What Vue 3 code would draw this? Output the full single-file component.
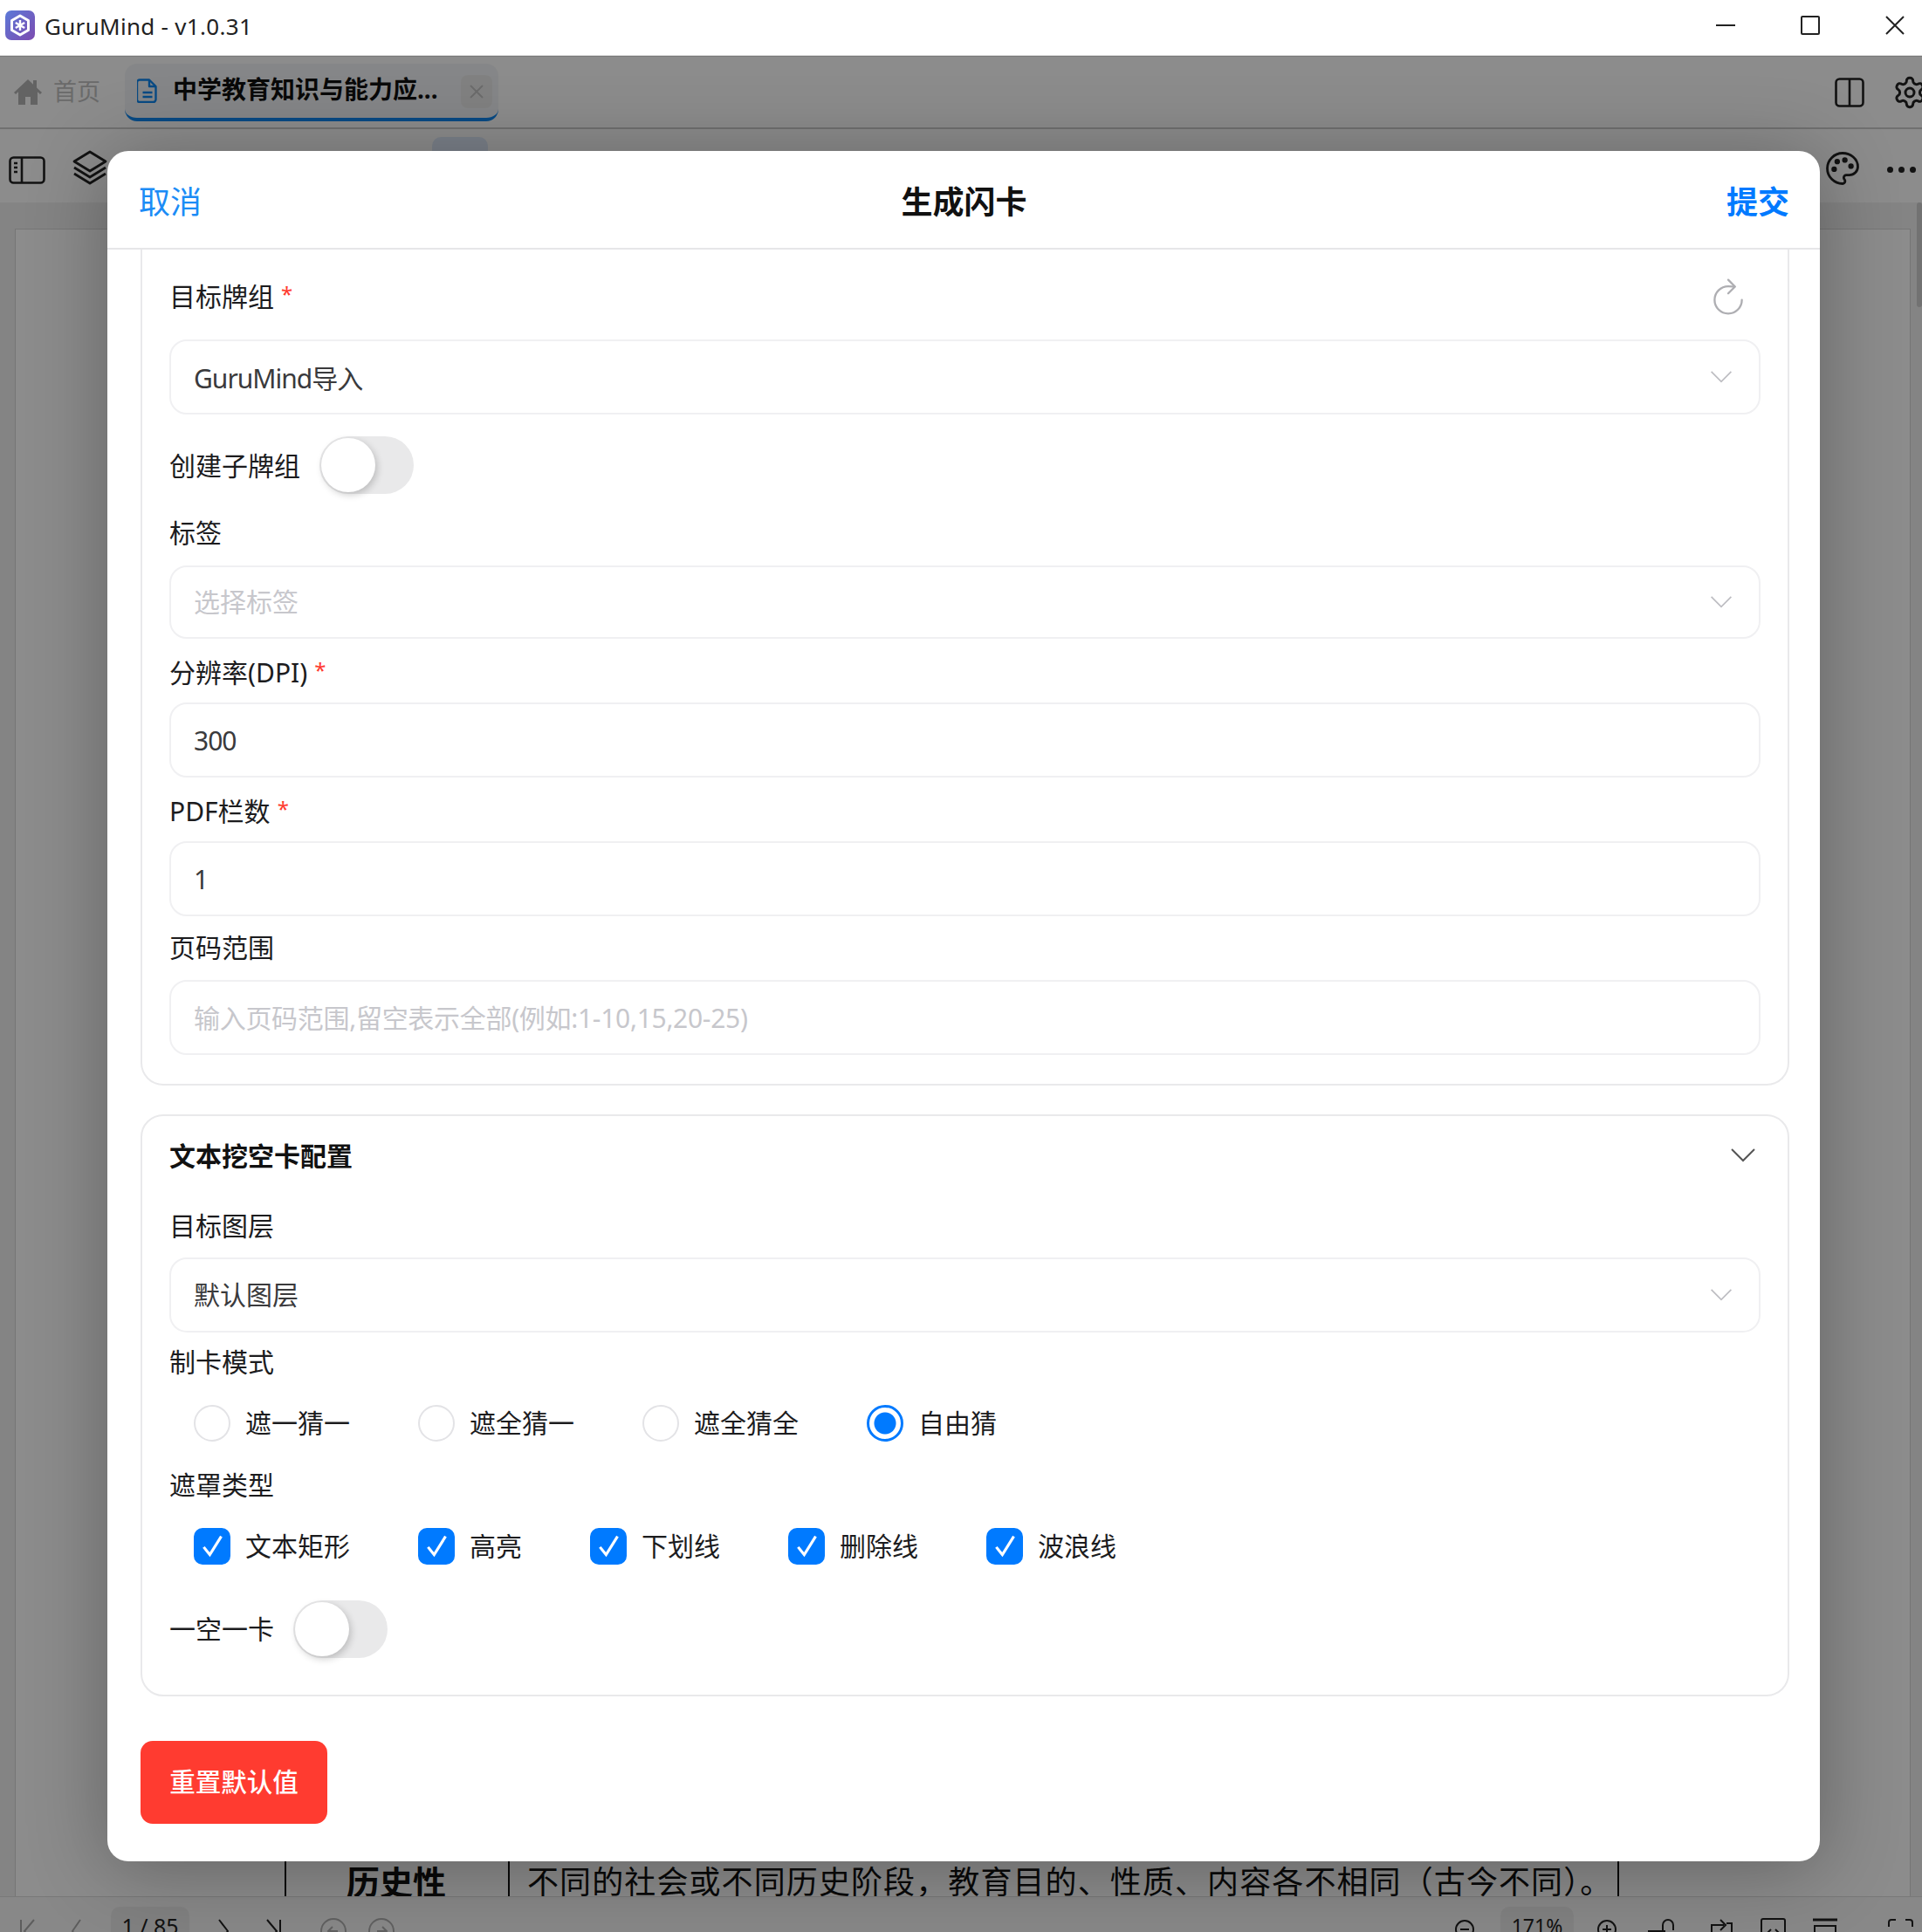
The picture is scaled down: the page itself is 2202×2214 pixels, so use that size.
<template>
  <div class="app">
    <div class="titlebar">
      <svg class="logo" viewBox="0 0 34 34">
        <defs>
          <linearGradient id="logoBg" x1="0" y1="0" x2="1" y2="1">
            <stop offset="0" stop-color="#5c7ad8" />
            <stop offset="1" stop-color="#7d4bb0" />
          </linearGradient>
        </defs>
        <rect width="34" height="34" rx="7" fill="url(#logoBg)" />
        <path d="M17 6l9.500 5.500v11L17 28l-9.500-5.500v-11z" fill="none" stroke="#fff" stroke-width="3" stroke-linejoin="round" />
        <path d="M17 11v12M11.800 14l10.400 6M22.200 14l-10.400 6" stroke="#fff" stroke-width="2.400" />
      </svg>
      <span class="app-name">GuruMind - v1.0.31</span>
      <div class="win-btns">
        <svg class="win-btn" viewBox="0 0 22 22"><path d="M0 11h22" /></svg>
        <svg class="win-btn" viewBox="0 0 22 22"><rect x="1" y="1" width="20" height="20" rx="1" /></svg>
        <svg class="win-btn" viewBox="0 0 22 22"><path d="M1 1l20 20M21 1L1 21" /></svg>
      </div>
    </div>

    <div class="tabbar">
      <svg class="home-icon" viewBox="0 0 32 30"><path d="M16 1L0 16l2 2 3-2.800V30h8v-9h6v9h8V15.200l3 2.800 2-2-6-5.600V2h-4v4.700z" fill="currentColor" /></svg>
      <span class="home-text">首页</span>
      <div class="tab">
        <svg class="doc-icon" viewBox="0 0 24 28" fill="none" stroke="currentColor" stroke-width="2.400" stroke-linejoin="round">
          <path d="M3 1.500h11l7.500 7.500v15a3 3 0 0 1-3 3h-15.500a3 3 0 0 1-3-3v-19.500a3 3 0 0 1 3-3z" />
          <path d="M14 2v7h7M6.500 16h11M6.500 21h11" />
        </svg>
        <span class="tab-title">中学教育知识与能力应...</span>
        <span class="tab-close">
          <svg viewBox="0 0 16 16"><path d="M1 1l14 14M15 1L1 15" /></svg>
        </span>
      </div>
      <div class="spacer"></div>
      <svg class="tool-icon columns" viewBox="0 0 34 34" fill="none" stroke="currentColor" stroke-width="2.600">
        <rect x="1.500" y="1.500" width="31" height="31" rx="4" />
        <path d="M17 2v30" />
      </svg>
      <svg class="tool-icon gear" viewBox="0 0 24 24" fill="none" stroke="currentColor" stroke-width="1.800" stroke-linejoin="round">
        <path d="M12.220 2h-.44a2 2 0 0 0-2 2v.18a2 2 0 0 1-1 1.730l-.43.25a2 2 0 0 1-2 0l-.15-.08a2 2 0 0 0-2.730.73l-.22.38a2 2 0 0 0 .73 2.730l.15.1a2 2 0 0 1 1 1.720v.51a2 2 0 0 1-1 1.740l-.15.09a2 2 0 0 0-.73 2.730l.22.38a2 2 0 0 0 2.730.73l.15-.08a2 2 0 0 1 2 0l.43.25a2 2 0 0 1 1 1.730V20a2 2 0 0 0 2 2h.44a2 2 0 0 0 2-2v-.18a2 2 0 0 1 1-1.730l.43-.25a2 2 0 0 1 2 0l.15.08a2 2 0 0 0 2.730-.73l.22-.39a2 2 0 0 0-.73-2.730l-.15-.08a2 2 0 0 1-1-1.740v-.5a2 2 0 0 1 1-1.740l.15-.09a2 2 0 0 0 .73-2.730l-.22-.38a2 2 0 0 0-2.730-.73l-.15.08a2 2 0 0 1-2 0l-.43-.25a2 2 0 0 1-1-1.730V4a2 2 0 0 0-2-2z" />
        <circle cx="12" cy="12" r="3" />
      </svg>
    </div>

    <div class="toolbar">
      <svg class="panel-icon" viewBox="0 0 42 32" fill="none" stroke="currentColor" stroke-width="2.600">
        <rect x="1.500" y="1.500" width="39" height="29" rx="4" />
        <path d="M15 2v28" />
        <path d="M6 8h4M6 13h4M6 18h4" stroke-width="2.400" />
      </svg>
      <svg class="layers-icon" viewBox="0 0 40 40" fill="none" stroke="currentColor" stroke-width="2.800" stroke-linejoin="round">
        <path d="M20 2L38 13 20 24 2 13z" />
        <path d="M2 20l18 11 18-11M2 27l18 11 18-11" />
      </svg>
      <div class="tool-pill"></div>
      <div class="spacer"></div>
      <svg class="palette-icon" viewBox="0 0 24 24" fill="none" stroke="currentColor" stroke-width="1.600">
        <circle cx="13.500" cy="6.500" r="1" fill="currentColor" />
        <circle cx="17.500" cy="10.500" r="1" fill="currentColor" />
        <circle cx="8.500" cy="7.500" r="1" fill="currentColor" />
        <circle cx="6.500" cy="12.500" r="1" fill="currentColor" />
        <path d="M12 2C6.500 2 2 6.500 2 12s4.500 10 10 10c.926 0 1.648-.746 1.648-1.688 0-.437-.18-.835-.437-1.125-.29-.289-.438-.652-.438-1.125a1.640 1.640 0 0 1 1.668-1.668h1.996c3.051 0 5.555-2.503 5.555-5.554C21.965 6.012 17.461 2 12 2z" />
      </svg>
      <span class="more-dots"><i></i><i></i><i></i></span>
    </div>

    <div class="doc-area">
      <div class="page">
        <div class="table-row">
          <div class="cell-key">历史性</div>
          <div class="cell-val">不同的社会或不同历史阶段，教育目的、性质、内容各不相同（古今不同）。</div>
        </div>
      </div>
      <div class="doc-scroll"></div>
    </div>

    <div class="bottombar">
      <svg class="nav first" viewBox="0 0 17 30"><path d="M1 2v26M16 2L5 15l11 13" /></svg>
      <svg class="nav prev" viewBox="0 0 11 30"><path d="M10 2L1 15l9 13" /></svg>
      <div class="page-pill"><span>1 / 85</span></div>
      <svg class="nav next" viewBox="0 0 12 30"><path d="M1 2l10 13L1 28" /></svg>
      <svg class="nav last" viewBox="0 0 17 30"><path d="M1 2l11 13L1 28M16 2v26" /></svg>
      <svg class="nav circle back" viewBox="0 0 30 30"><circle cx="15" cy="15" r="14" /><path d="M20 15H10M14 10l-5 5 5 5" /></svg>
      <svg class="nav circle fwd" viewBox="0 0 30 30"><circle cx="15" cy="15" r="14" /><path d="M10 15h10M16 10l5 5-5 5" /></svg>
      <div class="spacer"></div>
      <svg class="nav zoom-out" viewBox="0 0 22 30"><circle cx="11" cy="13" r="10" /><path d="M6 13h10" /></svg>
      <div class="zoom-pill"><span>171%</span></div>
      <svg class="nav zoom-in" viewBox="0 0 22 30"><circle cx="11" cy="13" r="10" /><path d="M6 13h10M11 8v10" /></svg>
      <svg class="nav lock" viewBox="0 0 30 30"><rect x="0" y="14" width="20" height="16" fill="#222" stroke="none" /><path d="M17 14V8a6 6 0 0 1 12 0v6" /></svg>
      <svg class="nav rotate" viewBox="0 0 27 30"><path d="M3 16V8h14M13 2l6 6-6 6M20 6h6v24" /></svg>
      <svg class="nav fit" viewBox="0 0 29 30"><rect x="1" y="1" width="27" height="34" rx="2" /><path d="M12 13l-3 3 3 3M17 13l3 3-3 3" /></svg>
      <svg class="nav width" viewBox="0 0 28 30"><path d="M0 2h28" stroke-width="3" /><rect x="2" y="9" width="24" height="30" /></svg>
      <svg class="nav full" viewBox="0 0 29 30"><path d="M1 10V5a3 3 0 0 1 3-3h5M20 2h5a3 3 0 0 1 3 3v5" /></svg>
    </div>

    <div class="scrim">
      <div class="modal">
        <div class="modal-head">
          <span class="head-btn">取消</span>
          <span class="head-title">生成闪卡</span>
          <span class="head-btn strong">提交</span>
        </div>
        <div class="modal-body">
          <div class="card card-clipped">
            <div class="deck-row">
              <span class="field-label">目标牌组<em>*</em></span>
              <svg class="refresh" viewBox="0 0 512 512" fill="none" stroke="currentColor" stroke-width="24" stroke-linecap="round" stroke-linejoin="round">
                <path d="M320 146s24.360-12-64-12a160 160 0 1 0 160 160" />
                <path d="M256 58l80 80-80 80" />
              </svg>
            </div>
            <div class="select first-select">
              <span class="latin">GuruMind导入</span>
              <svg class="chev" viewBox="0 0 28 16"><path d="M1 1l13 13L27 1" /></svg>
            </div>
            <div class="toggle-row sub-toggle">
              <span class="toggle-label">创建子牌组</span>
              <div class="toggle" :class="{ on: subDeck }" @click="subDeck = !subDeck"><i></i></div>
            </div>
            <div class="field tag-field">
              <div class="field-label">标签</div>
              <div class="select placeholder">
                <span>选择标签</span>
                <svg class="chev" viewBox="0 0 28 16"><path d="M1 1l13 13L27 1" /></svg>
              </div>
            </div>
            <div class="field">
              <div class="field-label">分辨率(DPI)<em>*</em></div>
              <input class="text-input" v-model="dpi" />
            </div>
            <div class="field">
              <div class="field-label">PDF栏数<em>*</em></div>
              <input class="text-input" v-model="columns" />
            </div>
            <div class="field">
              <div class="field-label">页码范围</div>
              <input class="text-input" v-model="pages" placeholder="输入页码范围,留空表示全部(例如:1-10,15,20-25)" />
            </div>
          </div>

          <div class="card card-second">
            <div class="card-title">
              <span>文本挖空卡配置</span>
              <svg class="chev dark" viewBox="0 0 28 16"><path d="M1 1l13 13L27 1" /></svg>
            </div>
            <div class="field layer-field">
              <div class="field-label">目标图层</div>
              <div class="select">
                <span>默认图层</span>
                <svg class="chev" viewBox="0 0 28 16"><path d="M1 1l13 13L27 1" /></svg>
              </div>
            </div>
            <div class="field mode-field">
              <div class="field-label">制卡模式</div>
            </div>
            <div class="options">
              <label v-for="m in modes" :key="m" class="option" @click="mode = m">
                <span class="radio" :class="{ on: mode === m }"></span>
                <span class="option-text">{{ m }}</span>
              </label>
            </div>
            <div class="field after-options">
              <div class="field-label">遮罩类型</div>
            </div>
            <div class="options">
              <label v-for="t in maskTypes" :key="t" class="option">
                <span class="check">
                  <svg viewBox="0 0 24 24"><path d="M6.500 12.500l4 5L18 5.500" /></svg>
                </span>
                <span class="option-text">{{ t }}</span>
              </label>
            </div>
            <div class="toggle-row one-toggle">
              <span class="toggle-label">一空一卡</span>
              <div class="toggle" :class="{ on: onePerCard }" @click="onePerCard = !onePerCard"><i></i></div>
            </div>
          </div>

          <button class="reset-btn">重置默认值</button>
        </div>
      </div>
    </div>
  </div>
</template>

<script setup>
import { ref } from 'vue'

const subDeck = ref(false)
const onePerCard = ref(false)
const dpi = ref('300')
const columns = ref('1')
const pages = ref('')
const mode = ref('自由猜')

const modes = ['遮一猜一', '遮全猜一', '遮全猜全', '自由猜']
const maskTypes = ['文本矩形', '高亮', '下划线', '删除线', '波浪线']
</script>

<style>
html,
body {
  margin: 0;
  overflow: hidden;
}
</style>

<style scoped>
.app {
  position: relative;
  width: 2202px;
  height: 2214px;
  display: flex;
  flex-direction: column;
  overflow: hidden;
  background: #fff;
  color: #1c1c1e;
  font-family: "Noto Sans", "Noto Sans CJK SC", sans-serif;
}

.spacer {
  flex: 1;
}

/* 标题栏 */
.titlebar {
  height: 63px;
  flex: none;
  display: flex;
  align-items: center;
  padding-left: 6px;
  box-sizing: border-box;
  background: #fff;
}

.logo {
  width: 34px;
  height: 34px;
  margin-top: -5px;
}

.app-name {
  margin-left: 11px;
  margin-top: -3px;
  font-size: 26px;
  letter-spacing: 0.3px;
  color: #222;
}

.win-btns {
  margin-left: auto;
  display: flex;
  gap: 75px;
  padding-right: 20px;
  margin-top: -5px;
}

.win-btn {
  width: 22px;
  height: 22px;
  fill: none;
  stroke: #222;
  stroke-width: 2;
}

/* 标签栏 */
.tabbar {
  height: 85px;
  flex: none;
  display: flex;
  align-items: center;
  padding-left: 16px;
  box-sizing: border-box;
  border-top: 2px solid #ddd;
  border-bottom: 2px solid #ccc;
  background: #fff;
}

.home-icon {
  width: 32px;
  height: 30px;
  margin-top: -2px;
  color: #b4b4b4;
}

.home-text {
  margin-left: 13px;
  margin-top: -5px;
  width: 54px;
  font-size: 27px;
  color: #c2c2c2;
  white-space: nowrap;
}

.tab {
  width: 428px;
  height: 66px;
  margin-left: 28px;
  display: flex;
  align-items: center;
  box-sizing: border-box;
  padding-left: 14px;
  background: #f3f5f7;
  border-radius: 14px;
  border-bottom: 4px solid #1088f0;
}

.doc-icon {
  width: 24px;
  height: 28px;
  color: #1088f0;
}

.tab-title {
  margin-left: 17px;
  margin-top: -5px;
  font-size: 28px;
  font-weight: 700;
  color: #111;
  white-space: nowrap;
}

.tab-close {
  margin-left: auto;
  margin-right: 7px;
  margin-top: 3px;
  width: 36px;
  height: 38px;
  display: flex;
  align-items: center;
  justify-content: center;
  border-radius: 8px;
  background: #ececec;
}

.tab-close svg {
  width: 16px;
  height: 18px;
  fill: none;
  stroke: #c4c4c4;
  stroke-width: 2;
}

.tool-icon {
  color: #222;
}

.columns {
  width: 34px;
  height: 34px;
}

.gear {
  width: 40px;
  height: 40px;
  margin-left: 32px;
  margin-right: -6px;
}

/* 工具栏 */
.toolbar {
  height: 84px;
  flex: none;
  display: flex;
  align-items: center;
  padding-left: 10px;
  box-sizing: border-box;
  background: #fff;
  color: #222;
}

.panel-icon {
  width: 42px;
  height: 32px;
  margin-top: 9px;
}

.layers-icon {
  width: 40px;
  height: 40px;
  margin-left: 31px;
  margin-top: 3px;
}

.tool-pill {
  width: 64px;
  height: 54px;
  margin-left: 372px;
  border-radius: 10px;
  background: #e0ecfb;
  margin-top: -12px;
}

.palette-icon {
  width: 42px;
  height: 42px;
  margin-top: 6px;
  margin-right: -1px;
}

.more-dots {
  display: flex;
  gap: 6px;
  margin-left: 31px;
  margin-right: 7px;
  margin-top: 8px;
}

.more-dots i {
  width: 7px;
  height: 7px;
  border-radius: 50%;
  background: #222;
}

/* 文档区 */
.doc-area {
  position: relative;
  height: 1942px;
  flex: none;
  display: flex;
  box-sizing: border-box;
  padding: 30px 13px 0 17px;
  background: #f1f1f1;
  border-bottom: 1px solid #ddd;
}

.page {
  flex: 1;
  display: flex;
  flex-direction: column;
  justify-content: flex-end;
  background: #fff;
  border: 1px solid #d8d8d8;
  border-bottom: 0;
  overflow: hidden;
}

.table-row {
  display: flex;
  flex: none;
  margin-left: 308px;
  width: 1527px;
  height: 48px;
  overflow: hidden;
  color: #111;
  font-family: "Liberation Serif", "Noto Sans CJK SC", serif;
  border-right: 2px solid #111;
}

.cell-key {
  width: 256px;
  box-sizing: border-box;
  border-left: 2px solid #111;
  padding-left: 69px;
  font-size: 38px;
  font-weight: 700;
  line-height: 66px;
}

.cell-val {
  flex: 1;
  box-sizing: border-box;
  border-left: 2px solid #111;
  padding-left: 20px;
  font-size: 36px;
  letter-spacing: 1.100px;
  line-height: 66px;
  white-space: nowrap;
}

.doc-scroll {
  position: absolute;
  right: 0;
  top: 0;
  width: 6px;
  height: 120px;
  border-radius: 3px;
  background: #d0d0d0;
}

/* 底栏 */
.bottombar {
  flex: 1;
  min-height: 0;
  display: flex;
  align-items: flex-start;
  box-sizing: border-box;
  background: #f8f8f8;
  color: #222;
  overflow: hidden;
}

.nav {
  height: 30px;
  flex: none;
  margin-top: 24px;
  fill: none;
  stroke: #222;
  stroke-width: 2;
}

.first {
  width: 17px;
  margin-left: 23px;
  stroke: #aaa;
}

.prev {
  width: 11px;
  margin-left: 42px;
  stroke: #aaa;
}

.page-pill {
  width: 90px;
  height: 60px;
  margin-left: 34px;
  margin-top: 11px;
  border-radius: 10px;
  background: #ececec;
  text-align: center;
  font-size: 25px;
  line-height: 44px;
}

.next {
  width: 12px;
  margin-left: 33px;
}

.last {
  width: 17px;
  margin-left: 43px;
}

.back {
  width: 30px;
  margin-left: 45px;
  stroke: #b0b0b0;
}

.fwd {
  width: 30px;
  margin-left: 25px;
  stroke: #b0b0b0;
}

.zoom-out {
  width: 22px;
}

.zoom-pill {
  width: 84px;
  height: 60px;
  margin-left: 30px;
  margin-top: 11px;
  border-radius: 10px;
  background: #ececec;
  text-align: center;
  font-size: 23px;
  line-height: 44px;
}

.zoom-in {
  width: 22px;
  margin-left: 27px;
}

.lock {
  width: 30px;
  margin-left: 36px;
}

.rotate {
  width: 27px;
  margin-left: 40px;
}

.fit {
  width: 29px;
  margin-left: 32px;
}

.width {
  width: 28px;
  margin-left: 31px;
}

.full {
  width: 29px;
  margin-left: 58px;
  margin-right: 10px;
}

/* 弹窗 */
.scrim {
  position: absolute;
  top: 64px;
  left: 0;
  right: 0;
  bottom: 0;
  padding: 109px 0 0 123px;
  background: rgba(0, 0, 0, 0.45);
}

.modal {
  width: 1962px;
  height: 1960px;
  display: flex;
  flex-direction: column;
  background: #fff;
  border-radius: 24px;
  box-shadow: 0 8px 90px rgba(0, 0, 0, 0.3);
  overflow: hidden;
}

.modal-head {
  height: 113px;
  flex: none;
  display: flex;
  align-items: center;
  justify-content: space-between;
  box-sizing: border-box;
  padding: 1px 35px 0 36px;
  border-bottom: 2px solid #e6e6e8;
}

.head-btn {
  font-size: 36px;
  color: #1c8cf6;
}

.head-btn.strong {
  font-weight: 700;
  color: #007aff;
}

.head-title {
  font-size: 36px;
  font-weight: 700;
  color: #111;
}

.modal-body {
  flex: 1;
  padding: 0 35px 0 38px;
}

.card {
  box-sizing: border-box;
  padding: 0 31px;
  background: #fff;
  border: 2px solid #e9e9eb;
  border-radius: 26px;
}

.card-clipped {
  height: 958px;
  border-top: 0;
  border-top-left-radius: 0;
  border-top-right-radius: 0;
}

.card-second {
  height: 667px;
  margin-top: 33px;
}

.deck-row {
  display: flex;
  align-items: center;
  justify-content: space-between;
  height: 40px;
  padding: 31px 12px 0 0;
}

.field-label {
  display: block;
  height: 40px;
  line-height: 40px;
  font-size: 30px;
  margin-bottom: 17px;
  white-space: nowrap;
}

.deck-row .field-label {
  margin-bottom: 0;
}

.field-label em {
  margin-left: 8px;
  font-style: normal;
  font-size: 24px;
  vertical-align: 5px;
  color: #ff3b30;
}

.refresh {
  width: 50px;
  height: 50px;
  margin-top: 6px;
  color: #aeaeb2;
}

.select,
.text-input {
  display: flex;
  align-items: center;
  justify-content: space-between;
  width: 100%;
  height: 86px;
  box-sizing: border-box;
  padding: 0 30px 0 26px;
  background: #fff;
  border: 2px solid #f0f0f2;
  border-radius: 20px;
  font-family: inherit;
  font-size: 30px;
  color: #3a3a3c;
  outline: none;
}

.select span {
  padding-bottom: 5px;
}

.select .latin {
  padding-bottom: 1px;
  letter-spacing: -1px;
}

.text-input {
  letter-spacing: -1px;
}

.first-select {
  margin-top: 32px;
}

.placeholder {
  height: 84px;
  color: #c7c7cc;
}

.text-input::placeholder {
  color: #c7c7cc;
  opacity: 1;
  letter-spacing: -0.3px;
}

.chev {
  width: 26px;
  height: 14px;
  flex: none;
  fill: none;
  stroke: #bdbdc2;
  stroke-width: 2;
}

.chev.dark {
  width: 28px;
  height: 16px;
  stroke: #555;
  margin-right: 6px;
  margin-top: 2px;
}

.toggle-row {
  display: flex;
  align-items: center;
  gap: 22px;
  font-size: 30px;
}

.toggle-label {
  padding-bottom: 2px;
}

.sub-toggle {
  margin-top: 25px;
}

.one-toggle {
  margin-top: 41px;
}

.one-toggle .toggle-label {
  padding-bottom: 4px;
}

.toggle {
  width: 108px;
  height: 66px;
  position: relative;
  border-radius: 33px;
  background: #e9e9ea;
}

.toggle i {
  position: absolute;
  left: 2px;
  top: 2px;
  width: 62px;
  height: 62px;
  border-radius: 50%;
  background: #fff;
  box-shadow: 2px 3px 8px rgba(0, 0, 0, 0.2);
}

.field {
  margin-top: 16px;
}

.tag-field {
  margin-top: 25px;
}

.card-title {
  display: flex;
  align-items: center;
  justify-content: space-between;
  height: 60px;
  margin-top: 14px;
  font-size: 30px;
  font-weight: 700;
  color: #111;
}

.layer-field {
  margin-top: 32px;
}

.layer-field .field-label {
  margin-bottom: 16px;
}

.mode-field {
  margin-top: 14px;
}

.options {
  display: flex;
  gap: 78px;
  margin-top: -17px;
  padding-left: 28px;
  padding-top: 29px;
}

.after-options {
  margin-top: 30px;
}

.option {
  display: flex;
  align-items: center;
  gap: 17px;
  height: 42px;
  font-size: 30px;
  white-space: nowrap;
}

.option-text {
  padding-bottom: 5px;
}

.radio {
  width: 42px;
  height: 42px;
  box-sizing: border-box;
  border: 2px solid #e3e3e6;
  border-radius: 50%;
}

.radio.on {
  border: 3px solid #007aff;
  background: radial-gradient(circle, #007aff 0 12px, #fff 13px);
}

.check {
  width: 42px;
  height: 42px;
  border-radius: 10px;
  background: #007aff;
}

.check svg {
  display: block;
  width: 42px;
  height: 42px;
  fill: none;
  stroke: #fff;
  stroke-width: 1.800;
}

.reset-btn {
  display: block;
  width: 214px;
  height: 95px;
  margin-top: 51px;
  padding: 0 0 5px;
  border: 0;
  border-radius: 14px;
  background: #ff3b30;
  color: #fff;
  font-family: inherit;
  font-size: 29.500px;
  font-weight: 500;
}
</style>
